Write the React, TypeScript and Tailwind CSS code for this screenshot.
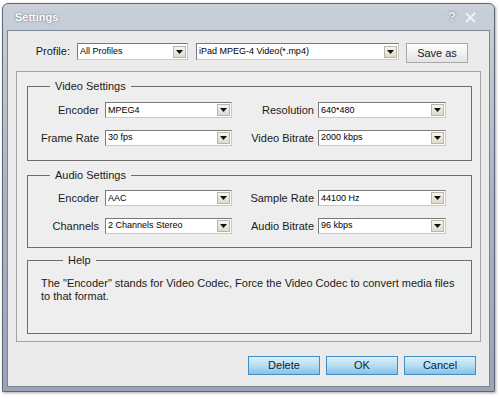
import type { ReactNode } from "react";

interface Field {
  label: string;
  value: string;
}

const videoRows: [Field, Field][] = [
  [{ label: "Encoder", value: "MPEG4" }, { label: "Resolution", value: "640*480" }],
  [{ label: "Frame Rate", value: "30 fps" }, { label: "Video Bitrate", value: "2000 kbps" }],
];

const audioRows: [Field, Field][] = [
  [{ label: "Encoder", value: "AAC" }, { label: "Sample Rate", value: "44100 Hz" }],
  [{ label: "Channels", value: "2 Channels Stereo" }, { label: "Audio Bitrate", value: "96 kbps" }],
];

function Combo({ value, className = "" }: { value: string; className?: string }) {
  return (
    <div
      className={`flex items-center bg-white border border-t-[#7a7a7a] border-l-[#7a7a7a] border-r-[#c9c9c9] border-b-[#c9c9c9] ${className}`}
    >
      <span className="pl-[2px] text-[9px] text-black whitespace-nowrap">{value}</span>
      <div className="ml-auto mr-[1px] w-[13px] h-[12px] flex items-center justify-center bg-gradient-to-b from-[#f6f5ee] to-[#dedbcd] border border-[#b9b6a8]">
        <svg width="7" height="4" viewBox="0 0 7 4">
          <path d="M0 0h7L3.5 4z" fill="#111" />
        </svg>
      </div>
    </div>
  );
}

function Group({ title, className = "", children }: { title: string; className?: string; children: ReactNode }) {
  return (
    <fieldset className={`border border-[#6e6e6e] ml-[10px] mr-[8px] ${className}`}>
      <legend className="ml-[22px] px-[5px] text-[11px] leading-[13px] text-[#1a1a1a]">{title}</legend>
      {children}
    </fieldset>
  );
}

function SettingRows({ rows }: { rows: [Field, Field][] }) {
  return (
    <div className="grid grid-cols-[71px_133px_82px_132px] gap-y-[11px] items-center">
      {rows.map(([a, b]) => (
        <div key={a.label} className="contents">
          <div className="text-right text-[11px] text-[#1a1a1a]">{a.label}</div>
          <Combo value={a.value} className="ml-[6px] w-[127px] h-[16px]" />
          <div className="text-right text-[11px] text-[#1a1a1a]">{b.label}</div>
          <Combo value={b.value} className="ml-[4px] w-[128px] h-[16px]" />
        </div>
      ))}
    </div>
  );
}

function BlueButton({ label }: { label: string }) {
  return (
    <button className="w-[72px] h-[19px] border border-[#3f8fc4] bg-gradient-to-b from-[#def1fb] via-[#b6ddf2] to-[#86c3e6] text-[11px] text-[#10233a] leading-none">
      {label}
    </button>
  );
}

export default function App() {
  return (
    <div className="w-[500px] h-[399px] bg-white font-['Liberation_Sans',Arial,sans-serif]">
      <div className="ml-[2px] pt-[3px]">
        <div className="w-[493px] h-[389px] rounded-t-[6px] border border-[#5d6877] bg-gradient-to-b from-[#c9d0d9] via-[#a9b3c0] to-[#9aa5b4] px-[4px] pb-[4px] flex flex-col shadow-[1px_1px_3px_rgba(0,0,0,0.35)]">
          {/* title bar */}
          <div className="h-[26px] flex items-center justify-between pl-[8px] pr-[14px]">
            <span className="text-[11px] font-bold text-white [text-shadow:0_0_2px_rgba(60,70,85,0.8)]">Settings</span>
            <div className="flex items-center gap-[9px] text-[#eef1f5] [text-shadow:0_0_2px_rgba(60,70,85,0.8)]">
              <span className="text-[13px] font-bold">?</span>
              <svg width="11" height="11" viewBox="0 0 11 11">
                <path d="M1 1l9 9M10 1l-9 9" stroke="#eef1f5" strokeWidth="2" />
              </svg>
            </div>
          </div>

          {/* body */}
          <div className="flex-1 flex flex-col bg-[#ebebeb] border border-[#7b8694]">
            {/* profile row */}
            <div className="flex items-start mt-[12px] h-[20px]">
              <span className="w-[62px] text-right text-[11px] text-[#1a1a1a] leading-[17px]">Profile:</span>
              <Combo value="All Profiles" className="ml-[7px] w-[111px] h-[17px]" />
              <Combo value="iPad MPEG-4 Video(*.mp4)" className="ml-[8px] w-[203px] h-[17px]" />
              <button className="ml-[7px] w-[62px] h-[20px] border border-[#a9a9a9] bg-gradient-to-b from-white to-[#e3e3e3] text-[11px] text-[#1a1a1a]">
                Save as
              </button>
            </div>

            {/* settings panel */}
            <div className="mx-[8px] mt-[8px] h-[271px] bg-[#eeeeee] border border-[#a3a3a3] pb-[8px]">
              <Group title="Video Settings" className="mt-[8px] pt-[9px] pb-[14px]">
                <SettingRows rows={videoRows} />
              </Group>
              <Group title="Audio Settings" className="mt-[8px] pt-[8px] pb-[13px]">
                <SettingRows rows={audioRows} />
              </Group>
              <Group title="Help" className="mt-[6px] pt-[10px] h-[80px] pl-[13px] pr-[10px]">
                <p className="text-[11px] leading-[13px] text-[#1a1a1a]">
                  The "Encoder" stands for Video Codec, Force the Video Codec to convert media files to that format.
                </p>
              </Group>
            </div>

            {/* buttons */}
            <div className="flex justify-end gap-[6px] mt-[14px] mr-[13px]">
              <BlueButton label="Delete" />
              <BlueButton label="OK" />
              <BlueButton label="Cancel" />
            </div>
          </div>
        </div>
      </div>
    </div>
  );
}
